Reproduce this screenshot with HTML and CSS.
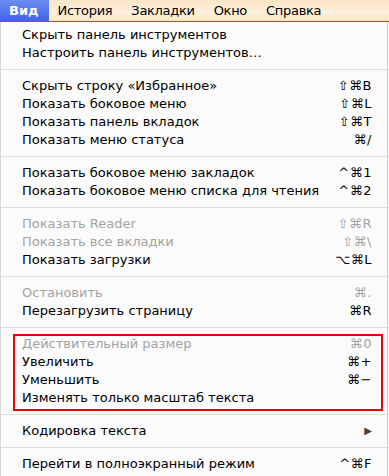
FILE: index.html
```html
<!DOCTYPE html>
<html lang="ru">
<head>
  <meta charset="UTF-8">
  <title>Вид</title>
  <link rel="stylesheet" href="styles.css">
</head>
<body>

<div class="menubar">
  <span class="title active">Вид</span>
  <span class="title">История</span>
  <span class="title">Закладки</span>
  <span class="title">Окно</span>
  <span class="title">Справка</span>
</div>

<div class="menu">
  <div class="item"><span>Скрыть панель инструментов</span></div>
  <div class="item"><span>Настроить панель инструментов…</span></div>
  <div class="sep"></div>
  <div class="item"><span>Скрыть строку «Избранное»</span><span class="key">⇧⌘B</span></div>
  <div class="item"><span>Показать боковое меню</span><span class="key">⇧⌘L</span></div>
  <div class="item"><span>Показать панель вкладок</span><span class="key">⇧⌘T</span></div>
  <div class="item"><span>Показать меню статуса</span><span class="key">⌘/</span></div>
  <div class="sep"></div>
  <div class="item"><span>Показать боковое меню закладок</span><span class="key">^⌘1</span></div>
  <div class="item"><span>Показать боковое меню списка для чтения</span><span class="key">^⌘2</span></div>
  <div class="sep"></div>
  <div class="item off"><span>Показать Reader</span><span class="key">⇧⌘R</span></div>
  <div class="item off"><span>Показать все вкладки</span><span class="key">⇧⌘\</span></div>
  <div class="item"><span>Показать загрузки</span><span class="key">⌥⌘L</span></div>
  <div class="sep"></div>
  <div class="item off"><span>Остановить</span><span class="key">⌘.</span></div>
  <div class="item"><span>Перезагрузить страницу</span><span class="key">⌘R</span></div>
  <div class="sep"></div>
  <div class="group">
    <div class="item off"><span>Действительный размер</span><span class="key">⌘0</span></div>
    <div class="item"><span>Увеличить</span><span class="key">⌘+</span></div>
    <div class="item"><span>Уменьшить</span><span class="key">⌘−</span></div>
    <div class="item"><span>Изменять только масштаб текста</span></div>
  </div>
  <div class="sep"></div>
  <div class="item"><span>Кодировка текста</span><span class="arrow">▶</span></div>
  <div class="sep"></div>
  <div class="item"><span>Перейти в полноэкранный режим</span><span class="key">^⌘F</span></div>
</div>

</body>
</html>
```

FILE: styles.css
```css
body {
  margin: 0;
  font-family: "DejaVu Sans", "Liberation Sans", sans-serif;
  font-size: 13px;
  color: #000;
  background: #fff;
  overflow: hidden;
}
.menubar {
  display: flex;
  height: 21px;
  border-bottom: 1px solid #8c5e38;
  background: linear-gradient(to bottom, #fbe6c8, #fdf0dc 60%, #fbe4c4);
}
.title {
  padding: 0 10px 0 9px;
  line-height: 21px;
  font-size: 13px;
  letter-spacing: -0.3px;
}
.title.active {
  background: linear-gradient(to bottom, #6c8cf2, #3f64e6);
  color: #fff;
  padding: 0 10px 0 9px;
  font-weight: bold;
  letter-spacing: 0;
}
.menu {
  width: 386px;
  border-left: 1px solid #d8d8d8;
  border-right: 1px solid #c8c8c8;
  background: #fbfbfb;
  padding-top: 4px;
  height: 460px;
}
.item {
  display: flex;
  justify-content: space-between;
  height: 18px;
  line-height: 18px;
  padding: 0 15px 0 21px;
  white-space: nowrap;
}
.item.off {
  color: #a3a3a3;
}
.key {
  letter-spacing: 0.5px;
}
.arrow {
  font-size: 10px;
  color: #444;
}
.sep {
  height: 1px;
  margin: 7px 0;
  background: #dedede;
}
.group {
  position: relative;
}
.group::after {
  content: "";
  position: absolute;
  top: -1px;
  left: 12px;
  right: 4px;
  bottom: -4px;
  border: 2px solid #e8000b;
}
```
